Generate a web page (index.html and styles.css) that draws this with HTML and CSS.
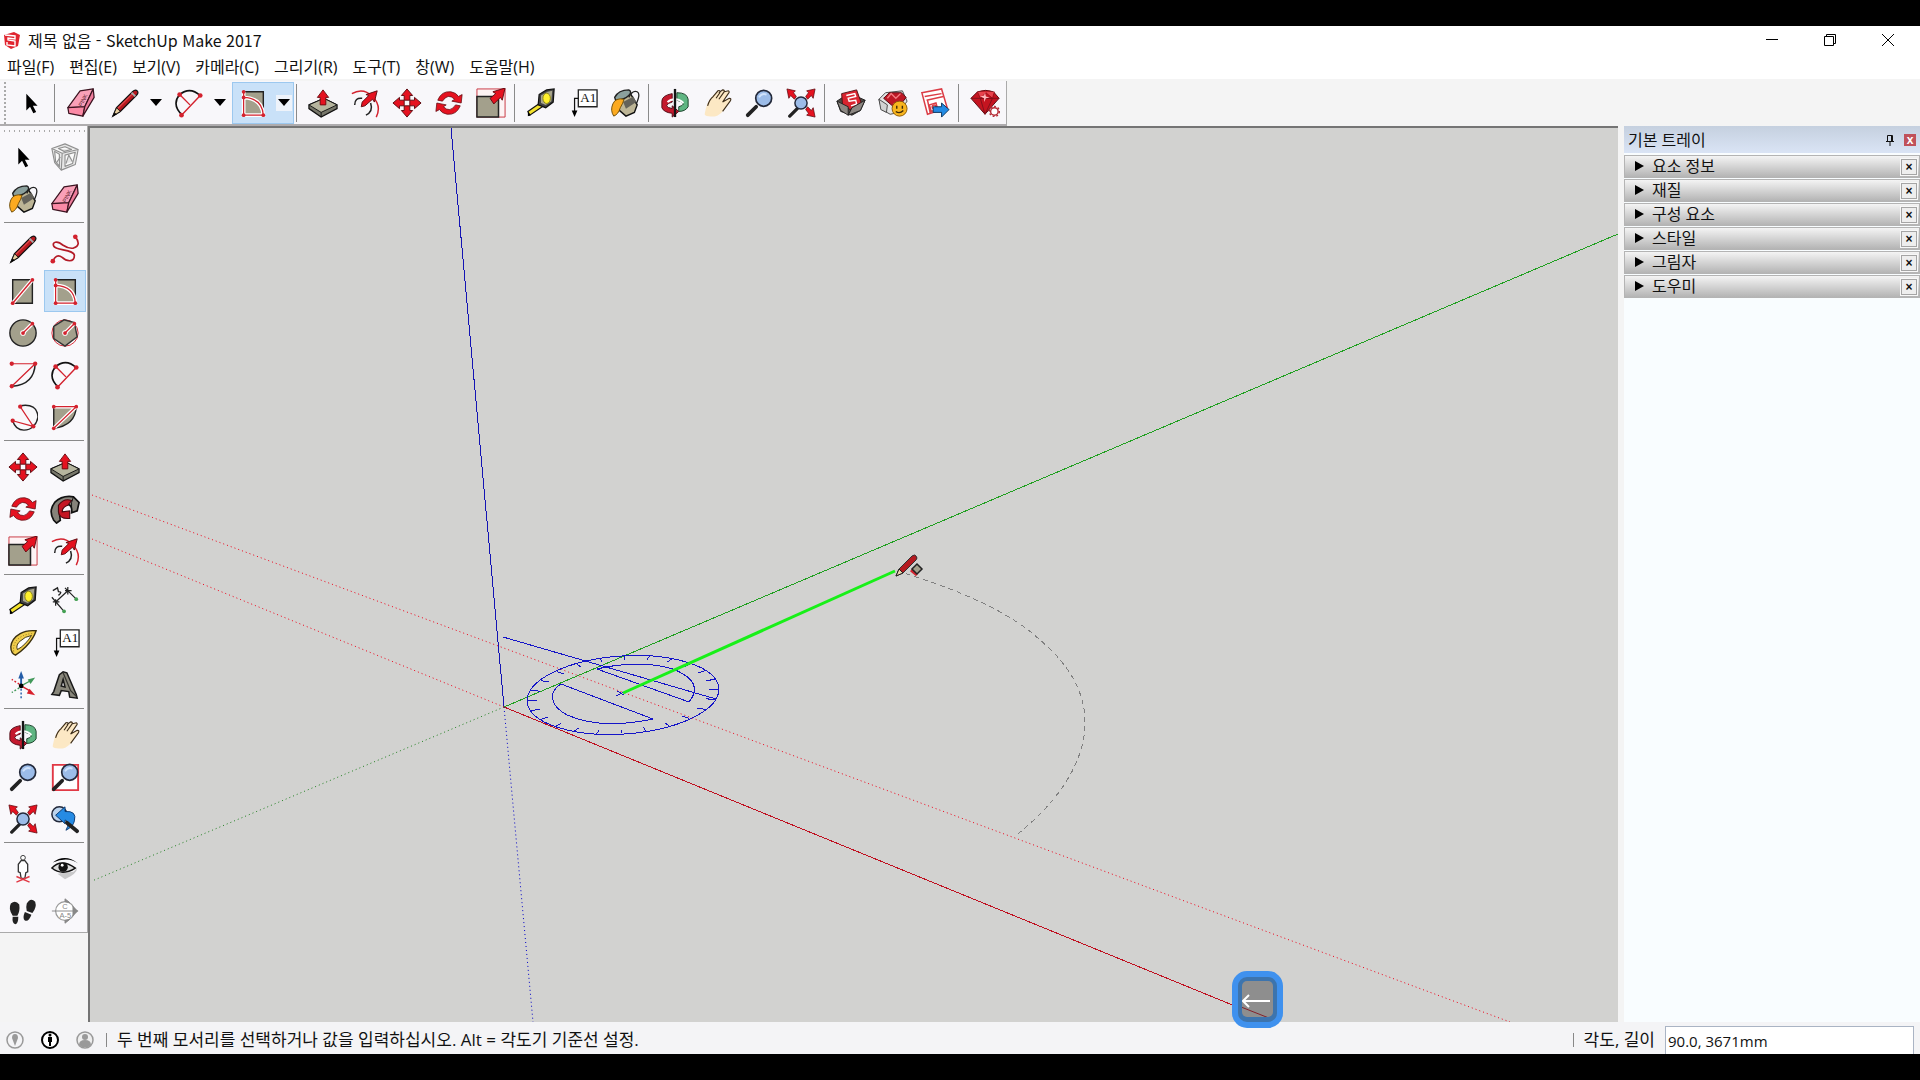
FILE: index.html
```html
<!DOCTYPE html>
<html lang="ko">
<head>
<meta charset="utf-8">
<title>제목 없음 - SketchUp Make 2017</title>
<link rel="stylesheet" href="styles.css">
</head>
<body>
<svg class="sprite" aria-hidden="true">
  <symbol id="select" viewBox="0 0 32 32"><path d="M11 6v18l4-4 3.500 7 3-1.500-3.500-6.500h5z" fill="#000"/></symbol>
  <symbol id="eraser" viewBox="0 0 32 32"><g stroke="#3b1420" stroke-width="1.300" stroke-linejoin="round"><path d="M2 21 15 3l14-2-9 19z" fill="#f9a0b8"/><path d="M2 21l18-1-2 10-15-3z" fill="#fb8aa6"/><path d="M20 20 29 1l1 9-12 20z" fill="#ef7d9c"/></g></symbol>
  <symbol id="pencil" viewBox="0 0 32 32"><path d="M3 30l4-9L24 4q3-3 5-1 2 2-1 5L11 25z" fill="#b7191f" stroke="#111" stroke-width="1.300"/><path d="M8 22 24 6" stroke="#e5484b" stroke-width="1.500"/><path d="M3 30l4-9 4 4z" fill="#e8cfa0" stroke="#111"/><path d="M3 30l2-4 2 2z"/><path d="M23 5l4 4" stroke="#aaa" stroke-width="2"/></symbol>
  <symbol id="arc2" viewBox="0 0 32 32"><g fill="none"><path d="M6 7Q-3 18 9 29M6 7Q17-2 28 8" stroke="#111" stroke-width="1.700"/><path d="M6 7l11 11M28 8 8 29" stroke="#d3222e" stroke-width="1.500"/></g><g fill="#d3222e"><circle cx="6" cy="7" r="2.500"/><circle cx="28" cy="8" r="2.500"/><circle cx="8" cy="29" r="2.500"/></g></symbol>
  <symbol id="rotrect" viewBox="0 0 32 32"><path d="M6 4h21v25H6z" fill="#a3a08c" stroke="#222" stroke-width="1.500"/><g fill="none"><path d="M6 4v25h21Q26 11 6 10" stroke="#fff" stroke-width="4"/><path d="M6 4v25h21Q26 11 6 10" stroke="#d3222e" stroke-width="1.300"/></g><g fill="#d3222e"><circle cx="6" cy="4" r="2"/><circle cx="6" cy="10" r="2"/><circle cx="6" cy="29" r="2"/><circle cx="27" cy="29" r="2"/></g></symbol>
  <symbol id="pushpull" viewBox="0 0 32 32"><path d="M1 18 17 11l14 7v4L14 31 1 22z" fill="#77776a" stroke="#111" stroke-width="1.300"/><path d="M1 18 17 11l14 7-17 8z" fill="#b6b59e" stroke="#111"/><path d="M14 26v5" stroke="#111"/><path d="M16 2l6 8h-3v8h-6v-8h-3z" fill="#e51220" stroke="#6d0b10"/></symbol>
  <symbol id="offset" viewBox="0 0 32 32"><g fill="none"><path d="M2 6Q14-1 24 9t4 22" stroke="#d3222e" stroke-width="1.600"/><path d="M5 18Q5 10 13 11M22 16q3 9-5 13" stroke="#222" stroke-width="1.600"/></g><path d="M13 15l7-7-3-1 12-4-3 12-2-3-8 7-4 1z" fill="#e51220" stroke="#5d0b10"/></symbol>
  <symbol id="move" viewBox="0 0 32 32"><g fill="#e51220" stroke="#5d0b10"><path id="mv" d="M16 1l6 7h-3v5h-6V8h-3z"/><use href="#mv" transform="rotate(90 16 16)"/><use href="#mv" transform="rotate(180 16 16)"/><use href="#mv" transform="rotate(270 16 16)"/></g></symbol>
  <symbol id="rotate" viewBox="0 0 32 32"><g fill="#e51220" stroke="#5d0b10" stroke-width=".8"><path id="rt" d="M4 13Q8 3 18 4q6 1 8 5l4-2-1 9-10-2 3-2q-7-7-13 2z"/><use href="#rt" transform="rotate(180 16 16)"/></g></symbol>
  <symbol id="scale" viewBox="0 0 32 32"><path d="M1 1h30v30H1z" fill="#fdf3f4" stroke="#c8323d"/><path d="M1 9h23v22H1z" fill="#a3a08c" stroke="#222" stroke-width="1.600"/><path d="M15 11l6-5-3-2 13-4-3 13-2-3-7 7z" fill="#e51220" stroke="#5d0b10"/></symbol>
  <symbol id="tape" viewBox="0 0 32 32"><path d="M2 25l13-9 4 3L4 29z" fill="#f5e32b" stroke="#111" stroke-width="1.300"/><path d="M2 25l3 4-3 1z"/><path d="M14 7 22 2l8-1-1 14-8 6-8-3z" fill="#444" stroke="#111" stroke-width="1.300"/><path d="M16 8l7-4 5-1-1 11-6 4-5-2z" fill="#aaa78e"/><ellipse cx="22" cy="11" rx="4" ry="5.500" fill="#fff02d" stroke="#8b8310"/></symbol>
  <symbol id="label" viewBox="0 0 32 32"><path d="M11 2h20v18H11z" fill="#fff" stroke="#222" stroke-width="1.400"/><path d="M11 11H7v14" fill="none" stroke="#111" stroke-width="1.300"/><path d="M4 24h6l-3 7z"/></symbol>
  <symbol id="paint" viewBox="0 0 32 32"><path d="M7 9 20 3l9 15-3 8-9 4-8-7z" fill="#bdb596" stroke="#111" stroke-width="1.500"/><path d="M5 10Q9 2 20 2q4 2 0 6-5 5-14 5z" fill="#8ba09d" stroke="#222" stroke-width="1.500"/><path d="M14 15l11-6 3 6-11 7z" fill="#64625a"/><path d="M20 10q4-8 9-6 4 2-1 13" fill="none" stroke="#222" stroke-width="1.400"/><path d="M15 12Q6 10 3 17q-3 7 1 13 5-2 7-9 3-5 4-9z" fill="#fcaa20" stroke="#6d4c08"/></symbol>
  <symbol id="orbit" viewBox="0 0 32 32"><path d="M18 5q11 0 12 7v8q-3 5-10 5v-5q4-1 5-3-2-3-7-4z" fill="#5fb582" stroke="#163d25"/><path d="M13 6Q2 8 2 14v7q2 5 11 6v4l7-6-7-6v3q-5-1-6-3 1-3 6-4z" fill="#c4192d" stroke="#4d0b14"/><path d="M8 15q3-3 8-3t9 4" fill="none" stroke="#fff" stroke-width="2"/><path d="M16 1v30" stroke="#151515" stroke-width="2.500"/></symbol>
  <symbol id="hand" viewBox="0 0 32 32"><path d="M3 27Q5 15 10 10l6-6q3-2 3 1l4-3q3 0 1 3l4-2q2 1 0 3l-6 9 7-4q3 0 1 3l-9 12q-6 6-14 4-5 0-4-3z" fill="#fce8c4"/><path d="M6 19Q8 12 12 9l5-6q3-1 2 2l-4 6m3-6 4-3q3 0 1 3l-5 7m6-8 4-1q2 1 0 3l-6 9 7-4q3 0 1 3l-8 11" fill="none" stroke="#3d2d19" stroke-width="1.200"/></symbol>
  <symbol id="zoomer" viewBox="0 0 32 32"><path d="M4 29l9-9" stroke="#222" stroke-width="4" stroke-linecap="round"/><circle cx="21" cy="11" r="8.500" fill="#9cbce8" stroke="#23293a" stroke-width="1.800"/><path d="M16 10q3-5 8-3" stroke="#cfe2fb" stroke-width="2" fill="none"/></symbol>
  <symbol id="extents" viewBox="0 0 32 32"><path d="M4 30l8-8" stroke="#222" stroke-width="3.500" stroke-linecap="round"/><circle cx="16" cy="16" r="6.500" fill="#9cbce8" stroke="#23293a" stroke-width="1.600"/><g fill="#e51220" stroke="#5d0b10" stroke-width=".8"><path d="M1 1l9 2-2 2 3 4-2 3-4-4-2 3z"/><path d="M31 1l-9 2 2 2-3 4 2 3 4-4 2 3z"/><path d="M31 31l-9-2 2-2-3-4 2-3 4 4 2-3z"/></g></symbol>
  <symbol id="warehouse" viewBox="0 0 32 32"><path d="M1 14l6-4 15-1 9 4-5 11-9 5-12-4z" fill="#4d4845" stroke="#1b1b1b"/><path d="M6 6l16-4 5 14-12 7-8-5z" fill="#d9232e" stroke="#4d1013"/><path d="M11 8l9-2 1 3-8 2 1 3 7-1 1 4-6 2" fill="none" stroke="#fff" stroke-width="1.500"/><path d="M1 14l12 6v9L5 24zM13 29l4-8 14-8-5 11z" fill="#8c8782" stroke="#222"/></symbol>
  <symbol id="share" viewBox="0 0 32 32"><path d="M1 12l7-7 18-2 5 11-8 12-10 2-9-5z" fill="#e4e4e4" stroke="#444"/><path d="M6 11l6-6h13l5 5-10 13z" fill="#bd1725" stroke="#54080f"/><path d="M10 11l4-5 5 5 5-5" fill="none" stroke="#f47a80" stroke-width="1.500"/><path d="M1 12l9 6-1 8-6-3z" fill="#d2d2d2" stroke="#444"/><circle cx="23" cy="22" r="8" fill="#f8b51e" stroke="#8b5a08"/><path d="M20 19v3m6-3v3m-7 3q4 3 8-1" stroke="#3d2908" stroke-width="1.500" fill="none"/></symbol>
  <symbol id="send" viewBox="0 0 32 32"><g fill="#fff" stroke="#db3c45" stroke-width="1.600"><path d="M2 5l21-4 6 20-21 7z"/><path d="M5 9l18-3M7 13l18-4M8 13l3 14M10 18l7-2 2 7-7 2z" fill="none"/><circle cx="15" cy="20" r="2"/></g><path d="M14 20h9v-4l8 7-8 8v-5h-9z" fill="#238be4" stroke="#0b325b"/></symbol>
  <symbol id="gem" viewBox="0 0 32 32"><path d="M1 11 8 4q9-3 17 0l6 7-15 17z" fill="#c41420" stroke="#55070e"/><path d="M8 4l3 7h13l2-7M11 11l6-6 7 6" fill="#e8434d" stroke="#8d0a14" stroke-width=".8"/><path d="M1 11h30M11 11l5 17 8-17" fill="none" stroke="#80101a"/><path d="M16 5l1 4 4 1-4 1-2 4v-4l-4-2 4-1z" fill="#ffb7bb"/><circle cx="26" cy="25" r="4" fill="#fff" stroke="#b52b35" stroke-width="1.500"/><circle cx="26" cy="25" r="5.300" fill="none" stroke="#b52b35" stroke-width="1.500" stroke-dasharray="2 2"/></symbol>
  <symbol id="component" viewBox="0 0 32 32"><g fill="#e6e6e6" stroke="#909090" stroke-width="1.200" stroke-linejoin="round"><path d="M2 7l14-5 14 6-3 16-15 6L5 22z"/><path d="M2 7l11 5 17-4M13 12l-1 18M5 10l5 3v13l-4-5zM16 14l11-3-3 12-8 3zM9 7l7-2 7 3-8 2z" fill="#fafafa"/><path d="M17 23l3-9 4 7M7 22l4-6"/></g></symbol>
  <symbol id="freehand" viewBox="0 0 32 32"><path d="M27 3q7 9-2 12-5 1-11-3C7 6 2 9 4 13c2 5 22 3 22 10 0 8-9 6-13 2-4-3-8-2-10 5" fill="none" stroke="#b31b27" stroke-width="1.800"/><circle cx="27" cy="3" r="2.500" fill="#d3222e"/><circle cx="3" cy="29" r="2.500" fill="#d3222e"/></symbol>
  <symbol id="rect" viewBox="0 0 32 32"><path d="M5 4h21v25H5z" fill="#a3a08c" stroke="#222" stroke-width="1.500"/><path d="M5 29 26 4" stroke="#fff" stroke-width="4"/><path d="M5 29 26 4" stroke="#d3222e" stroke-width="1.500"/><circle cx="5" cy="29" r="2" fill="#d3222e"/><circle cx="26" cy="4" r="2" fill="#d3222e"/></symbol>
  <symbol id="circle" viewBox="0 0 32 32"><circle cx="16" cy="16" r="14" fill="#a3a08c" stroke="#222" stroke-width="1.500"/><path d="M16 16 26 6" stroke="#fff" stroke-width="4"/><circle cx="16" cy="16" r="3" fill="#fff"/><path d="M16 16 26 6" stroke="#d3222e" stroke-width="1.500"/><circle cx="16" cy="16" r="2" fill="#d3222e"/><circle cx="26" cy="6" r="2" fill="#d3222e"/></symbol>
  <symbol id="polygon" viewBox="0 0 32 32"><circle cx="16" cy="16" r="14" fill="#fff" stroke="#d3222e"/><path d="M26 5l3 15-13 10L4 22 4 9 15 2z" fill="#a3a08c" stroke="#333" stroke-width="1.500"/><path d="M16 16 26 6" stroke="#fff" stroke-width="4"/><circle cx="16" cy="16" r="3" fill="#fff"/><path d="M16 16 26 6" stroke="#d3222e" stroke-width="1.500"/><circle cx="16" cy="16" r="2" fill="#d3222e"/><circle cx="26" cy="6" r="2" fill="#d3222e"/></symbol>
  <symbol id="arc1" viewBox="0 0 32 32"><path d="M29 4q-1 22-24 24" fill="none" stroke="#222" stroke-width="1.600"/><path d="M4 4h25L4 28" fill="none" stroke="#d3222e" stroke-width="1.300"/><g fill="#d3222e"><circle cx="4" cy="4" r="2.300"/><circle cx="29" cy="4" r="2.300"/><circle cx="4" cy="28" r="2.300"/></g></symbol>
  <symbol id="arc3" viewBox="0 0 32 32"><path d="M13 4q18-3 19 12-1 6-5 10M27 26q-4 4-10 4-9 0-12-10" fill="none" stroke="#222" stroke-width="1.500"/><path d="M13 5l14 21L5 20" fill="none" stroke="#d3222e" stroke-width="1.300"/><g fill="#d3222e"><circle cx="13" cy="5" r="2.300"/><circle cx="27" cy="26" r="2.300"/><circle cx="5" cy="20" r="2.300"/></g></symbol>
  <symbol id="pie" viewBox="0 0 32 32"><path d="M4 5h24q-1 20-24 23z" fill="#a3a08c" stroke="#222" stroke-width="1.500"/><path d="M4 5h24L4 28" fill="none" stroke="#fff" stroke-width="4"/><path d="M4 5h24L4 28" fill="none" stroke="#d3222e" stroke-width="1.300"/><g fill="#d3222e"><circle cx="4" cy="5" r="2"/><circle cx="28" cy="5" r="2"/><circle cx="4" cy="28" r="2"/></g></symbol>
  <symbol id="follow" viewBox="0 0 32 32"><path d="M4 28Q-2 18 5 9 13 1 25 3l6 6-2 9-6 2q1-8-4-9-8 1-9 9l1 8-4 3z" fill="#86837a" stroke="#111" stroke-width="1.800"/><path d="M9 12q6-8 14-5l-4 5q-6 2-6 7l8-1v8q-11 1-12-7z" fill="#c51523" stroke="#4d0810" stroke-width="1.200"/><path d="M25 3l-2 6v10" stroke="#111" fill="none"/></symbol>
  <symbol id="dimension" viewBox="0 0 32 32"><path d="M6 17 19 5M2 12l12 14M16 2l12 12M3 17h7m-4-3v7M16 5h7m-4-4v8" stroke="#222" stroke-width="1.300"/><path d="M3 5l5-3 1 4q5 0 0 4" fill="none" stroke="#222" stroke-width="1.400"/><circle cx="15" cy="27" r="2" fill="#43a052"/><circle cx="28" cy="14" r="2" fill="#43a052"/></symbol>
  <symbol id="protractor" viewBox="0 0 32 32"><path d="M8 29Q3 27 3 20 4 11 13 6 20 2 30 3q-3 9-11 17-5 5-11 9z" fill="#f0cd4b" stroke="#3a2f0e" stroke-width="1.500"/><path d="M10 23q-2-5 3-9 5-5 12-6-3 5-7 9-4 4-8 6z" fill="#fff" stroke="#3a2f0e"/><path d="M6 25Q5 15 13 10q6-4 14-4" fill="none" stroke="#806716" stroke-dasharray="1 2"/></symbol>
  <symbol id="axes" viewBox="0 0 32 32"><path d="M14 17V7" stroke="#245da8" stroke-width="2"/><path d="M14 1l3 8h-6z" fill="#245da8"/><path d="M14 17l9-5" stroke="#42995a" stroke-width="1.500"/><path d="M29 8l-5 7-3-5z" fill="#42995a"/><path d="M14 17l9 5" stroke="#d8202c" stroke-width="1.500"/><path d="M29 27l-9-2 3-5z" fill="#d8202c"/><path d="M14 20v10" stroke="#245da8" stroke-width="1.500" stroke-dasharray="2 2"/><path d="M12 19l-8 5" stroke="#42995a" stroke-width="1.500" stroke-dasharray="2 2"/><path d="M12 15l-8-5" stroke="#d8202c" stroke-width="1.500" stroke-dasharray="2 2"/><circle cx="14" cy="17" r="2.500"/></symbol>
  <symbol id="text3d" viewBox="0 0 32 32"><path d="M2 26l2-3 6-18 4-3 4 1 10 23 1 4-8-1-1-6-8-1-2 5zM12 17l4 1-2-8z" fill="#89877b" fill-rule="evenodd" stroke="#191919" stroke-width="1.600"/><path d="M14 3l8 19 6 6" fill="none" stroke="#35342f" stroke-width="1.300"/></symbol>
  <symbol id="zoomwin" viewBox="0 0 32 32"><path d="M3 3h27v27H3z" fill="#fff" stroke="#e13945" stroke-width="2"/><use href="#zoomer"/></symbol>
  <symbol id="previous" viewBox="0 0 32 32"><circle cx="10" cy="11" r="8" fill="#bdd4ed" stroke="#23293a" stroke-width="1.600"/><path d="M6 12 16 3v5q13-1 10 10-1 6-9 10 5-9-1-11v4z" fill="#268be4" stroke="#0b3970"/><path d="M18 20l11 9" stroke="#222" stroke-width="4" stroke-linecap="round"/></symbol>
  <symbol id="position" viewBox="0 0 32 32"><circle cx="16" cy="4" r="2.500" fill="#fff" stroke="#333"/><path d="M14 7h4l3 4v8l-2 1-1 6h-4l-1-6-2-1v-8z" fill="#fff" stroke="#333" stroke-width="1.400"/><path d="M9 30l14-6M9 24l14 6" stroke="#e13945" stroke-width="1.500"/></symbol>
  <symbol id="look" viewBox="0 0 32 32"><path d="M3 9Q16-1 30 10 19 2 3 9z"/><path d="M2 15Q12 4 27 15q-14 9-25 0z" fill="#ddd" stroke="#111" stroke-width="1.500"/><circle cx="14" cy="14" r="5" fill="#111"/><circle cx="13" cy="12" r="1.500" fill="#fff"/><path d="M8 21l17-2 4-4q0 6-13 12zM10 18q5 5 2 6" fill="#999" opacity=".5"/></symbol>
  <symbol id="walk" viewBox="0 0 32 32"><path d="M3 8q5-4 9 1 1 7-2 12H5Q0 14 3 8zM5 22h6q0 7-3 8-4-1-3-8zM20 8q4-7 9-2 2 6-3 12l-6-2q-1-5 0-8zM18 17l7 3q-3 8-7 6-3-2 0-9z" fill="#222"/></symbol>
  <symbol id="section" viewBox="0 0 32 32"><circle cx="16" cy="16" r="10" fill="#fff" stroke="#999" stroke-width="1.300"/><path d="M2 16h28M16 3l5 4-5-1zM16 29l5-4-5 1z" fill="#888" stroke="#888"/><path d="M24 10l6 6-6 6z" fill="#888"/></symbol>
</svg>

<div class="window">
  <header class="titlebar">
    <svg class="logo" viewBox="0 0 18 18"><path d="M1 4l10-3 6 3-2 11-7 3-6-4z" fill="#e0252f"/><path d="M2 4l10 1v3L5 7v2l7 1v5l-8-1v-3" fill="none" stroke="#fff" stroke-width="1.400"/></svg>
    <h1 class="title">제목 없음 - SketchUp Make 2017</h1>
    <div class="controls">
      <button class="control" aria-label="최소화"><svg viewBox="0 0 14 14"><path d="M1 6.500h12"/></svg></button>
      <button class="control" aria-label="이전 크기로"><svg viewBox="0 0 14 14"><path d="M1.500 3.500h9v9h-9zM3.500 3V1.500h9v9H11"/></svg></button>
      <button class="control" aria-label="닫기"><svg viewBox="0 0 14 14"><path d="M1 1l12 12M13 1 1 13"/></svg></button>
    </div>
  </header>
  <nav class="menu">
    <button>파일(F)</button><button>편집(E)</button><button>보기(V)</button><button>카메라(C)</button><button>그리기(R)</button><button>도구(T)</button><button>창(W)</button><button>도움말(H)</button>
  </nav>
  <div class="toolstrip">
    <div class="toolbar" role="toolbar">
      <button class="tool" aria-label="선택"><svg><use href="#select"/></svg></button>
      <span class="rule"></span>
      <button class="tool" aria-label="지우개"><svg viewBox="0 0 32 32"><use href="#eraser"/><text x="10" y="17" transform="rotate(-62 16 13)" class="ink-eraser">PINK</text></svg></button>
      <div class="split"><button class="tool" aria-label="선"><svg><use href="#pencil"/></svg></button><button class="drop" aria-label="선 도구 더 보기"></button></div>
      <div class="split"><button class="tool" aria-label="호"><svg><use href="#arc2"/></svg></button><button class="drop" aria-label="호 도구 더 보기"></button></div>
      <div class="split active"><button class="tool" aria-label="회전된 직사각형"><svg><use href="#rotrect"/></svg></button><button class="drop" aria-label="도형 더 보기"></button></div>
      <span class="rule"></span>
      <button class="tool" aria-label="밀기/끌기"><svg><use href="#pushpull"/></svg></button>
      <button class="tool" aria-label="오프셋"><svg><use href="#offset"/></svg></button>
      <button class="tool" aria-label="이동"><svg><use href="#move"/></svg></button>
      <button class="tool" aria-label="회전"><svg><use href="#rotate"/></svg></button>
      <button class="tool" aria-label="배율"><svg><use href="#scale"/></svg></button>
      <span class="rule"></span>
      <button class="tool" aria-label="줄자"><svg><use href="#tape"/></svg></button>
      <button class="tool" aria-label="텍스트"><svg viewBox="0 0 32 32"><use href="#label"/><text x="13" y="15" class="ink-label">A1</text></svg></button>
      <button class="tool" aria-label="페인트통"><svg><use href="#paint"/></svg></button>
      <span class="rule"></span>
      <button class="tool" aria-label="궤도"><svg><use href="#orbit"/></svg></button>
      <button class="tool" aria-label="이동 보기"><svg><use href="#hand"/></svg></button>
      <button class="tool" aria-label="확대/축소"><svg><use href="#zoomer"/></svg></button>
      <button class="tool" aria-label="범위 확대"><svg><use href="#extents"/></svg></button>
      <span class="rule"></span>
      <button class="tool" aria-label="3D Warehouse"><svg><use href="#warehouse"/></svg></button>
      <button class="tool" aria-label="모델 공유"><svg><use href="#share"/></svg></button>
      <button class="tool" aria-label="LayOut으로 보내기"><svg><use href="#send"/></svg></button>
      <span class="rule"></span>
      <button class="tool" aria-label="Extension Warehouse"><svg><use href="#gem"/></svg></button>
    </div>
  </div>

  <main class="workspace">
    <aside class="palette" role="toolbar">
      <div class="group">
        <button class="tool" aria-label="선택"><svg><use href="#select"/></svg></button><button class="tool" aria-label="구성 요소 만들기"><svg><use href="#component"/></svg></button>
        <button class="tool" aria-label="페인트통"><svg><use href="#paint"/></svg></button><button class="tool" aria-label="지우개"><svg viewBox="0 0 32 32"><use href="#eraser"/><text x="10" y="17" transform="rotate(-62 16 13)" class="ink-eraser">PINK</text></svg></button>
      </div>
      <div class="group">
        <button class="tool" aria-label="선"><svg><use href="#pencil"/></svg></button><button class="tool" aria-label="자유곡선"><svg><use href="#freehand"/></svg></button>
        <button class="tool" aria-label="직사각형"><svg><use href="#rect"/></svg></button><button class="tool active" aria-label="회전된 직사각형"><svg><use href="#rotrect"/></svg></button>
        <button class="tool" aria-label="원"><svg><use href="#circle"/></svg></button><button class="tool" aria-label="다각형"><svg><use href="#polygon"/></svg></button>
        <button class="tool" aria-label="호"><svg><use href="#arc1"/></svg></button><button class="tool" aria-label="2점 호"><svg><use href="#arc2"/></svg></button>
        <button class="tool" aria-label="3점 호"><svg><use href="#arc3"/></svg></button><button class="tool" aria-label="부채꼴"><svg><use href="#pie"/></svg></button>
      </div>
      <div class="group">
        <button class="tool" aria-label="이동"><svg><use href="#move"/></svg></button><button class="tool" aria-label="밀기/끌기"><svg><use href="#pushpull"/></svg></button>
        <button class="tool" aria-label="회전"><svg><use href="#rotate"/></svg></button><button class="tool" aria-label="따라가기"><svg><use href="#follow"/></svg></button>
        <button class="tool" aria-label="배율"><svg><use href="#scale"/></svg></button><button class="tool" aria-label="오프셋"><svg><use href="#offset"/></svg></button>
      </div>
      <div class="group">
        <button class="tool" aria-label="줄자"><svg><use href="#tape"/></svg></button><button class="tool" aria-label="치수"><svg><use href="#dimension"/></svg></button>
        <button class="tool" aria-label="각도기"><svg><use href="#protractor"/></svg></button><button class="tool" aria-label="텍스트"><svg viewBox="0 0 32 32"><use href="#label"/><text x="13" y="15" class="ink-label">A1</text></svg></button>
        <button class="tool" aria-label="축"><svg><use href="#axes"/></svg></button><button class="tool" aria-label="3D 텍스트"><svg><use href="#text3d"/></svg></button>
      </div>
      <div class="group">
        <button class="tool" aria-label="궤도"><svg><use href="#orbit"/></svg></button><button class="tool" aria-label="이동 보기"><svg><use href="#hand"/></svg></button>
        <button class="tool" aria-label="확대/축소"><svg><use href="#zoomer"/></svg></button><button class="tool" aria-label="창 확대"><svg><use href="#zoomwin"/></svg></button>
        <button class="tool" aria-label="범위 확대"><svg><use href="#extents"/></svg></button><button class="tool" aria-label="이전"><svg><use href="#previous"/></svg></button>
      </div>
      <div class="group">
        <button class="tool" aria-label="카메라 배치"><svg><use href="#position"/></svg></button><button class="tool" aria-label="둘러보기"><svg><use href="#look"/></svg></button>
        <button class="tool" aria-label="이동 시점"><svg><use href="#walk"/></svg></button><button class="tool" aria-label="단면"><svg viewBox="0 0 32 32"><use href="#section"/><text x="13" y="14" class="ink-section">C</text><text x="10" y="23" class="ink-section">A-5</text></svg></button>
      </div>
    </aside>

    <section class="viewport">
      <svg class="scene" viewBox="90 128 1528 894" preserveAspectRatio="xMidYMid slice">
        <g fill="none" shape-rendering="crispEdges">
          <path d="M451 128 504 707" stroke="#1414b4"/>
          <path d="M504 707 1618 234" stroke="#20a020"/>
          <path d="M504 707 1274 1022" stroke="#c01020"/>
          <g stroke-dasharray="1 3" shape-rendering="auto">
            <path d="M504 707l29 315" stroke="#0000c8"/>
            <path d="M504 707 92 881" stroke="#208020"/>
            <path d="M504 707 92 539M92 495 1510 1022" stroke="#f00018"/>
          </g>
          <g stroke="#1414c8">
            <ellipse cx="623" cy="695" rx="96" ry="39" transform="rotate(-4 623 695)"/>
            <path d="M597 669C625 662 665 662 683 674 697 682 697 692 689 702zM561 684C548 692 550 706 567 715 590 725 620 726 653 719zM503 637l213 62M616 696l8-4M617 691l7 4"/>
            <g transform="matrix(.955 -.06 -.02 .39 623 695)">
              <path id="ticks" vector-effect="non-scaling-stroke" d="M90 0h10M86.900 23.300 96.600 25.900M77.900 45 86.600 50M63.600 63.600 70.700 70.700M45 77.900 50 86.600M23.300 86.900 25.900 96.600"/>
              <use href="#ticks" transform="rotate(90)"/><use href="#ticks" transform="rotate(180)"/><use href="#ticks" transform="rotate(270)"/>
            </g>
          </g>
          <path d="M897 571C960 590 1010 612 1040 640 1070 665 1085 693 1085 722 1085 765 1055 805 1014 837" stroke="#808080" stroke-dasharray="5 4"/>
        </g>
        <path d="M623 693 895 571" stroke="#18f018" stroke-width="3"/>
        <path d="M896 576l3-7 13-13q3-2 4 0 2 2 0 4l-13 13z" fill="#b51a20" stroke="#333"/>
        <path d="M896 576l3-7 4 4z" fill="#e8d4aa" stroke="#222"/>
        <path d="M911 570l6 5" stroke="#d3222e" stroke-width="3"/>
        <path d="M917 564l5 5-5 5-5-5z" fill="#a3a08c" stroke="#222" stroke-width="1.500"/>
      </svg>
      <div class="key"><svg viewBox="0 0 31 36"><path d="M1 20h27M7 14l-6 6 6 6" fill="none" stroke="#fff" stroke-width="2"/><path d="M-6 24 32 39" stroke="#84212a"/></svg></div>
    </section>

    <aside class="tray">
      <header class="tray-head"><h2>기본 트레이</h2>
        <button class="pin" aria-label="자동 숨기기"><svg viewBox="0 0 10 12"><path d="M2.500 1.500h5v6h-5zM6.500 2v6M1 7.500h8M5 8v4" fill="none" stroke="#111"/></svg></button>
        <button class="tray-close" aria-label="닫기">x</button></header>
      <div class="panel"><button class="expand">요소 정보</button><button class="panel-close" aria-label="요소 정보 닫기"></button></div>
      <div class="panel"><button class="expand">재질</button><button class="panel-close" aria-label="재질 닫기"></button></div>
      <div class="panel"><button class="expand">구성 요소</button><button class="panel-close" aria-label="구성 요소 닫기"></button></div>
      <div class="panel"><button class="expand">스타일</button><button class="panel-close" aria-label="스타일 닫기"></button></div>
      <div class="panel"><button class="expand">그림자</button><button class="panel-close" aria-label="그림자 닫기"></button></div>
      <div class="panel"><button class="expand">도우미</button><button class="panel-close" aria-label="도우미 닫기"></button></div>
    </aside>
  </main>

  <footer class="status">
    <button class="badge" aria-label="위치"><svg viewBox="0 0 20 20"><circle cx="10" cy="10" r="8" fill="none" stroke="#999" stroke-width="1.500"/><path d="M10 16 7 8q0-4 3-4t3 4z" fill="#999"/></svg></button>
    <button class="badge" aria-label="제작자"><svg viewBox="0 0 20 20"><circle cx="10" cy="10" r="8" fill="#fff" stroke="#000" stroke-width="2"/><circle cx="10" cy="5" r="1.500"/><path d="M8 7h4v5h-1v4H9v-4H8z"/></svg></button>
    <button class="badge" aria-label="로그인"><svg viewBox="0 0 20 20"><circle cx="10" cy="10" r="8" fill="#eee" stroke="#999" stroke-width="1.500"/><circle cx="10" cy="7" r="3" fill="#999"/><path d="M4 15q0-5 6-5t6 5l-3 2H7z" fill="#999"/></svg></button>
    <span class="bar"></span>
    <p class="hint">두 번째 모서리를 선택하거나 값을 입력하십시오. Alt = 각도기 기준선 설정.</p>
    <span class="bar"></span>
    <label for="measure">각도, 길이</label>
    <input id="measure" type="text" value="90.0, 3671mm">
  </footer>
</div>
</body>
</html>
```
FILE: styles.css
```css
* { box-sizing: border-box; }
body {
  margin: 0;
  background: #000;
  color: #111;
  font: 16px/20px "Open Sans", "Noto Sans CJK KR", sans-serif;
}
button {
  padding: 0;
  border: 0;
  background: none;
  color: inherit;
  font: inherit;
}
h1, h2, p { margin: 0; font-size: 16px; font-weight: 400; }
.sprite { position: absolute; width: 0; height: 0; }
.ink-eraser { font: 6px "Liberation Sans", sans-serif; fill: #5b1c2e; }
.ink-label { font: 14px "Liberation Serif", serif; fill: #111; }
.ink-section { font: 8px "Liberation Sans", sans-serif; fill: #888; }

.window {
  display: flex;
  flex-direction: column;
  min-height: 100vh;
  padding: 26px 0;
}
.titlebar {
  display: flex;
  align-items: center;
  height: 28px;
  padding: 0 3px;
  background: #fff;
}
.logo { width: 18px; height: 18px; margin-right: 7px; }
.title { font-family: "Noto Sans CJK KR", sans-serif; }
.controls { display: flex; margin-left: auto; }
.control { display: grid; place-items: center; width: 58px; height: 28px; }
.control svg { width: 14px; height: 14px; fill: none; stroke: #000; }
.menu {
  display: flex;
  gap: 15px;
  height: 25px;
  padding: 0 7px;
  background: #fff;
}

.toolstrip {
  display: flex;
  height: 47px;
  padding-top: 2px;
  background: #f4f4f4;
}
.toolbar {
  display: flex;
  align-items: center;
  padding-left: 10px;
  border-right: 1px solid #aaa;
  border-bottom: 2px solid #aeacae;
  background: radial-gradient(circle, #aaa 1px, transparent 1px) 3px 0 / 4px 4px repeat-y, #f8f7fa;
}
.tool { display: grid; place-items: center; width: 42px; height: 42px; }
.tool svg { width: 30px; height: 30px; }
.split { display: flex; align-items: center; margin-left: 2px; }
.split.active, .tool.active { background: #c9e1f8; outline: 1px solid #9cc8ef; outline-offset: -1px; }
.drop { display: grid; place-items: center; width: 20px; height: 42px; }
.drop::before {
  content: "";
  border: 6px solid transparent;
  border-top: 7px solid #000;
  border-bottom: 0;
}
.active .drop { width: 16px; height: 16px; margin: 0 2px; background: #eef3fa; }
.rule { width: 1px; height: 38px; margin: 0 5px 0 2px; background: #8a8a8a; }

.workspace { display: flex; flex: 1; background: #f4f4f4; }
.palette {
  align-self: flex-start;
  width: 88px;
  padding: 10px 0 0 2px;
  border-right: 1px solid #aaa;
  border-bottom: 1px solid #aaa;
  background: radial-gradient(circle, #aaa 1px, transparent 1px) 2px 3px / 5px 4px repeat-x, #f9f8fb;
}
.group { display: grid; grid-template-columns: 42px 42px; }
.group + .group {
  margin-top: 2px;
  padding-top: 5px;
  border-top: 1px solid transparent;
  background: linear-gradient(#8a8a8a, #8a8a8a) 2px 0 / 80px 1px no-repeat;
  background-origin: border-box;
}

.viewport {
  position: relative;
  flex: 1;
  min-width: 0;
  border: solid #747474;
  border-width: 2px 0 0 2px;
  background: #d2d2d0;
}
.scene { display: block; position: absolute; inset: 0; width: 100%; height: 100%; }
.key {
  position: absolute;
  right: 335px;
  bottom: -6px;
  width: 51px;
  height: 57px;
  padding: 4px;
  border: 6px solid #3f91ee;
  border-radius: 15px;
  background: #3d74ad;
}
.key svg { display: block; width: 31px; height: 36px; border-radius: 5px; background: #8e8e8e; }

.tray { width: 296px; margin-left: 6px; background: #f9fdff; }
.tray-head {
  display: flex;
  align-items: center;
  gap: 9px;
  height: 27px;
  margin-bottom: 2px;
  padding: 0 4px;
  background: linear-gradient(#c5d0df, #dae4f5);
}
.tray-head h2 { flex: 1; }
.pin { display: grid; width: 10px; height: 12px; }
.tray-close {
  width: 12px;
  height: 12px;
  background: #c0515a;
  color: #fff;
  font: bold 12px/10px "Liberation Sans", sans-serif;
}
.panel {
  display: flex;
  align-items: center;
  height: 23px;
  margin-bottom: 1px;
  padding-right: 2px;
  border: 1px solid #b4b4b4;
  background: linear-gradient(#f4f4f4, #b4b4b4);
}
.expand { display: flex; flex: 1; align-items: center; gap: 8px; padding: 0 0 2px 10px; }
.expand::before {
  content: "";
  border: 5px solid transparent;
  border-left: 9px solid #000;
  border-right: 0;
}
.panel-close {
  display: grid;
  place-items: center;
  width: 16px;
  height: 16px;
  border: 1px solid #a5a5a5;
  outline: 1px solid #f8f8f8;
  background: #eee;
}
.panel-close::before { content: "×"; font: bold 12px/12px "Liberation Sans", sans-serif; }

.status {
  display: flex;
  align-items: center;
  height: 32px;
  padding: 4px 6px 0 5px;
  background: #f4f4f6;
  font-size: 17px;
}
.badge { width: 20px; height: 20px; margin-right: 15px; }
.badge svg { display: block; width: 20px; height: 20px; }
.bar { width: 1px; height: 14px; margin: 0 10px 0 -4px; background: #888; }
.hint { flex: 1; font-size: 17px; }
.status label { margin-right: 10px; }
.status input {
  align-self: stretch;
  width: 249px;
  padding: 0 2px;
  border: 1px solid #aab4c4;
  border-bottom: 0;
  background: #fff;
  color: #111;
  font: 15px/20px "Open Sans", "Noto Sans CJK KR", sans-serif;
}
```
